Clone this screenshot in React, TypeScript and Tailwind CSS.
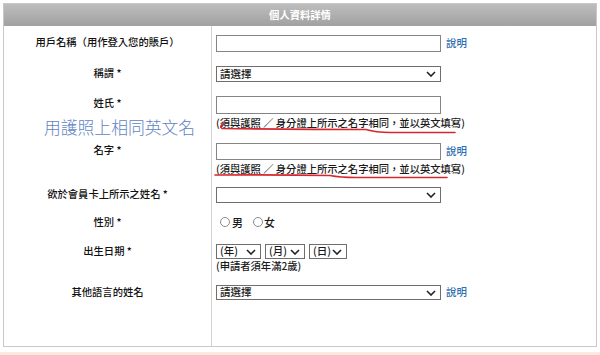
import type { ReactNode } from 'react';

const font = { fontFamily: '"Noto Sans CJK TC", "Noto Sans", sans-serif' };

function Chevron() {
  return (
    <svg width="10" height="6" viewBox="0 0 10 6" className="shrink-0">
      <path d="M1 1 L5 5 L9 1" fill="none" stroke="#222" strokeWidth="1.6" />
    </svg>
  );
}

function FakeSelect({ text, className }: { text?: string; className: string }) {
  return (
    <div className={`flex items-center justify-between border border-[#6e6e6e] bg-white pl-[3px] pr-[4px] ${className}`}>
      <span className="text-[10.5px] font-medium leading-none text-[#1a1a1a]">{text}</span>
      <Chevron />
    </div>
  );
}

function HelpLink() {
  return <span className="ml-[5px] text-[10.5px] font-medium leading-none text-[#2f6fb1]">說明</span>;
}

function Hint({ children }: { children: ReactNode }) {
  return <div className="text-[10.3px] font-medium leading-[14px] text-[#1a1a1a]">{children}</div>;
}

function Row({ pad, label, children }: { pad: string; label?: string; children: ReactNode }) {
  return (
    <div className="grid grid-cols-[208px_1fr]">
      <div className={`border-r border-[#d4d4d4] text-center text-[10.3px] font-medium leading-[14px] text-[#111] ${pad}`}>{label}</div>
      <div className={`pl-[4px] ${pad}`}>{children}</div>
    </div>
  );
}

const hintText = '(須與護照 ／ 身分證上所示之名字相同，並以英文填寫)';

export default function App() {
  return (
    <div className="relative h-[355px] w-[600px] overflow-hidden bg-white" style={font}>
      <div className="ml-[3px] mt-[3px] flex h-[344px] w-[594px] flex-col border border-[#c9c9c9]">
        {/* Header */}
        <div className="flex h-[22px] items-center justify-center bg-gradient-to-b from-[#bdbdbd] to-[#a1a1a1]">
          <span className="text-[10.3px] font-bold text-white">個人資料詳情</span>
        </div>

        <Row pad="pt-[9px]" label="用戶名稱（用作登入您的賬戶）">
          <div className="flex items-center">
            <div className="h-[17px] w-[225px] border border-[#858585] bg-white" />
            <HelpLink />
          </div>
        </Row>

        <Row pad="pt-[14px]" label="稱謂 *">
          <FakeSelect text="請選擇" className="h-[16px] w-[225px]" />
        </Row>

        <Row pad="pt-[14px]" label="姓氏 *">
          <div className="h-[18px] w-[225px] border border-[#858585] bg-white" />
          <div className="mt-[2px]">
            <Hint>{hintText}</Hint>
          </div>
        </Row>

        <Row pad="pt-[13px]" label="名字 *">
          <div className="flex items-center">
            <div className="h-[17px] w-[225px] border border-[#858585] bg-white" />
            <HelpLink />
          </div>
          <div className="mt-[2px]">
            <Hint>{hintText}</Hint>
          </div>
        </Row>

        <Row pad="pt-[11px]" label="欲於會員卡上所示之姓名 *">
          <FakeSelect className="h-[16px] w-[225px]" />
        </Row>

        <Row pad="pt-[12px]" label="性別 *">
          <div className="flex h-[14px] items-center text-[11px] font-medium text-[#1a1a1a]">
            <span className="ml-[4px] mr-[2px] h-[10px] w-[10px] rounded-full border border-[#8a8a8a]" />
            <span>男</span>
            <span className="ml-[10px] mr-[1px] h-[10px] w-[10px] rounded-full border border-[#8a8a8a]" />
            <span>女</span>
          </div>
        </Row>

        <Row pad="pt-[15px]" label="出生日期 *">
          <div className="flex gap-[4px]">
            <FakeSelect text="(年)" className="h-[15px] w-[45px]" />
            <FakeSelect text="(月)" className="h-[15px] w-[40px]" />
            <FakeSelect text="(日)" className="h-[15px] w-[38px]" />
          </div>
          <Hint>(申請者須年滿2歲)</Hint>
        </Row>

        <Row pad="pt-[12px]" label="其他語言的姓名">
          <div className="flex items-center">
            <FakeSelect text="請選擇" className="h-[15px] w-[225px]" />
            <HelpLink />
          </div>
        </Row>

        <div className="grid flex-1 grid-cols-[208px_1fr]">
          <div className="border-r border-[#d4d4d4]" />
          <div />
        </div>
      </div>

      <div className="mt-[5px] h-[3px] w-full bg-[#fae9df]" />

      {/* hand-drawn annotation */}
      <div className="pointer-events-none absolute left-[44px] top-[117px] text-[16.8px] font-light leading-[20px] text-[#6084c2]">
        用護照上相同英文名
      </div>
      <svg className="pointer-events-none absolute left-0 top-0" width="600" height="355" viewBox="0 0 600 355">
        <path
          d="M224 123 Q219 126 222 128.5 Q300 129.5 366 129.5 Q376 132.5 390 132.5 L455 132.5"
          fill="none"
          stroke="#d7262e"
          strokeWidth="1.6"
          strokeLinecap="round"
        />
        <path
          d="M215 175 Q280 174.5 330 175.5 Q340 177.5 356 177.5 L447 177.5"
          fill="none"
          stroke="#d7262e"
          strokeWidth="1.6"
          strokeLinecap="round"
        />
      </svg>
    </div>
  );
}
